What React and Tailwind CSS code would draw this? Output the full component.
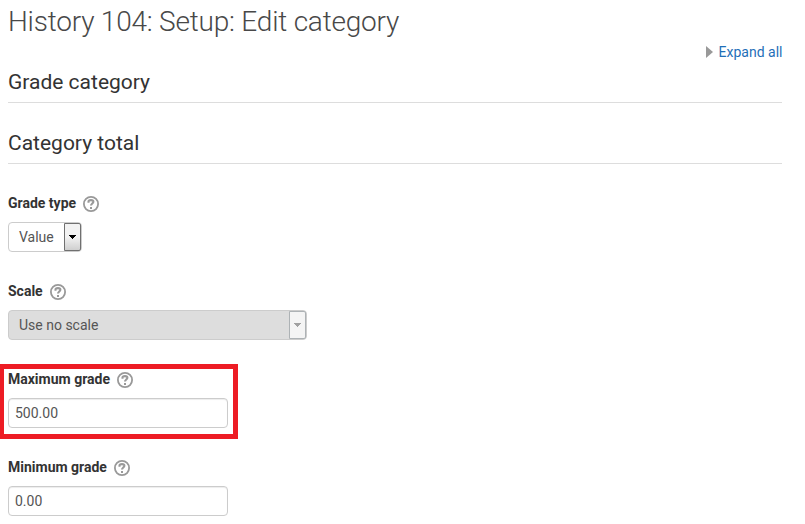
function HelpIcon() {
  return (
    <svg className="h-4 w-4 shrink-0" viewBox="0 0 16 16" fill="none" aria-label="Help">
      <circle cx="8" cy="8" r="7.1" stroke="#999" strokeWidth="1.8" />
      <path d="M5.5 6.7V5.6C5.5 4.5 6.5 4.1 8 4.1s2.4.5 2.4 1.7c0 1.6-2.4 1.8-2.4 3.7" stroke="#999" strokeWidth="2.1" />
      <path d="M7 10.9h2v2H7z" fill="#999" />
    </svg>
  );
}

function Section({ title }) {
  return (
    <h2 className="h-[61px] w-[774px]">
      <span className="block h-[42px] border-b border-[#ddd] text-[21px] leading-[42px] text-[#333]">{title}</span>
    </h2>
  );
}

function Field({ label, highlighted, children }) {
  return (
    <div className="relative h-[88px]">
      <div className="flex h-5 items-center gap-[7px] text-sm font-bold text-[#333]">
        <span>{label}</span>
        <span className="pt-px"><HelpIcon /></span>
      </div>
      <div className="mt-[9px]">{children}</div>
      {highlighted && (
        <div className="pointer-events-none absolute -left-2 -top-[5px] h-[75px] w-[238px] border-[5px] border-l-4 border-[#ed1c24]" />
      )}
    </div>
  );
}

function Select({ value, className, disabled }) {
  return (
    <button
      type="button"
      disabled={disabled}
      className={`flex h-[30px] items-stretch justify-between rounded border border-[#ccc] text-left text-sm ${disabled ? "bg-[#ddd]" : "bg-white"} ${className}`}
    >
      <span className="pl-2.5 leading-7 text-[#555]">{value}</span>
      <span
        className={`flex w-[17px] items-center justify-center rounded-r-[2px] border ${
          disabled ? "border-[#adb2b5] bg-[#f4f4f4] text-[#a0a0a0]" : "border-[#707070] bg-linear-to-b from-[#f2f2f2] from-50% to-[#cfcfcf] text-black"
        }`}
      >
        <svg width="7" height="4" viewBox="0 0 7 4" fill="currentColor" shapeRendering="crispEdges">
          <path d="M0 0h7v1H0zM1 1h5v1H1zM2 2h3v1H2zM3 3h1v1H3z" />
        </svg>
      </span>
    </button>
  );
}

function TextInput({ value }) {
  return (
    <input
      defaultValue={value}
      className="block h-[30px] w-[220px] rounded border border-[#ccc] bg-white px-1.5 text-sm text-[#555] shadow-[inset_0_1px_1px_rgba(0,0,0,0.075)] outline-none"
    />
  );
}

export default function App() {
  return (
    <main className="h-[524px] overflow-hidden bg-white px-2 font-['Roboto','Liberation_Sans',sans-serif]">
      <h1 className="h-[42px] text-[28px] font-light leading-[44px] tracking-[-0.21px] text-[#484848]">History 104: Setup: Edit category</h1>
      <div className="flex h-[19px] w-[774.5px] items-center justify-end gap-1.5 text-sm leading-5 text-[#1f6fb8]">
        <svg width="7" height="12" viewBox="0 0 7 12" fill="#999"><path d="M0 0l7 6-7 6z" /></svg>
        <a href="#expand">Expand all</a>
      </div>
      <Section title="Grade category" />
      <Section title="Category total" />
      <div className="pt-[10px]">
        <Field label="Grade type"><Select value="Value" className="w-[74px]" /></Field>
        <Field label="Scale"><Select value="Use no scale" className="w-[299px]" disabled /></Field>
        <Field label="Maximum grade" highlighted><TextInput value="500.00" /></Field>
        <Field label="Minimum grade"><TextInput value="0.00" /></Field>
      </div>
    </main>
  );
}
